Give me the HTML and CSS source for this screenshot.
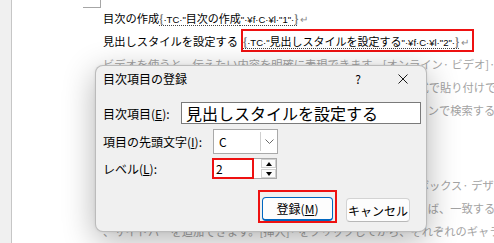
FILE: index.html
```html
<!DOCTYPE html>
<html lang="ja">
<head>
<meta charset="utf-8">
<link rel="stylesheet" href="styles.css">
</head>
<body>
<div class="app">
  <div class="gutter"></div>
  <div class="page">
    <div class="corner"></div>
    <div class="doc">
      <p class="line">目次の作成<span class="field"><b class="brace">{</b>·TC·"<span class="fj">目次の作成</span>"·¥f·C·¥l·"1"·<b class="brace">}</b></span><span class="pm">↵</span></p>
      <p class="line">見出しスタイルを設定する<span class="mark"><span class="field"><b class="brace">{</b>·TC·"<span class="fj">見出しスタイルを設定する</span>"·¥f·C·¥l·"2"·<b class="brace">}</b></span><span class="pm">↵</span></span></p>
      <p class="line faded">ビデオを使うと、伝えたい内容を明確に表現できます。[オンライン· ビデオ]· をクリックすると、追加したいビデオを</p>
      <p class="line faded">クリックすると、追加したいビデオを、その埋め込みコード形式で貼り付けできるようになります。</p>
      <p class="line faded">ようになります。キーワードを入力して最適なビデオをオンラインで検索することもできます。</p>
      <p class="line faded">ともできます。</p>
      <p class="line faded gap">Word· に用意されてるヘッダー、フッター、表紙、テキスト· ボックス· デザインを組み合わせると、</p>
      <p class="line faded">わせると、プロのようなできばえの文書を作成できます。たとえば、一致する表紙、ヘッダー</p>
      <p class="line faded">、サイドバーを追加できます。[挿入]· をクリックしてから、それぞれのギャラリーで目的の要素を選んでください。</p>
    </div>
  </div>
</div>

<div class="dialog">
  <div class="titlebar">
    <span class="title">目次項目の登録</span>
    <span class="help">?</span>
    <svg class="close" width="10" height="10" viewBox="0 0 10 10"><path d="M0.5 0.5L9.5 9.5M9.5 0.5L0.5 9.5" stroke="#1a1a1a" stroke-width="1" fill="none"/></svg>
  </div>
  <div class="form">
    <div class="row r1">
      <span class="lbl l1">目次項目(<u>E</u>):</span>
      <div class="textbox">見出しスタイルを設定する</div>
    </div>
    <div class="row r2">
      <span class="lbl l2">項目の先頭文字(<u>I</u>):</span>
      <div class="combo">
        <span class="combo-val">C</span>
        <span class="combo-btn"><svg width="9" height="5" viewBox="0 0 9 5"><path d="M0.5 0.5L4.5 4.5L8.5 0.5" stroke="#6a6a6a" stroke-width="1" fill="none"/></svg></span>
      </div>
    </div>
    <div class="row r3">
      <span class="lbl l3">レベル(<u>L</u>):</span>
      <div class="spin">
        <span class="spin-val">2</span>
        <span class="spin-btns">
          <span class="sb"><svg width="6" height="4" viewBox="0 0 6 4"><path d="M3 0L6 4H0Z" fill="#000"/></svg></span>
          <span class="sb"><svg width="6" height="4" viewBox="0 0 6 4"><path d="M0 0H6L3 4Z" fill="#000"/></svg></span>
        </span>
      </div>
    </div>
  </div>
  <div class="buttons">
    <div class="hl"><button class="btn primary">登録(<u>M</u>)</button></div>
    <button class="btn cancel">キャンセル</button>
  </div>
</div>
</body>
</html>
```

FILE: styles.css
```css
* { box-sizing: border-box; margin: 0; padding: 0; }
html, body { width: 494px; height: 243px; overflow: hidden; }
body {
  font-family: "Noto Sans CJK JP", "Noto Sans", sans-serif;
  background: #fff;
  color: #000;
  position: relative;
}

.app { display: flex; height: 243px; }
.gutter { width: 12px; flex: none; background: #f0f0f0; border-right: 1px solid #c6c6c6; }
.page { flex: 1; overflow: hidden; background: #fff; }
.corner {
  width: 18px; height: 8px; margin-left: 71px;
  border-right: 1px solid #a6a6a6; border-bottom: 1px solid #a6a6a6;
}
.doc { margin-top: -1px; padding-left: 91px; font-size: 11.25px; white-space: nowrap; }
.line { height: 23px; line-height: 23px; }
.faded { color: #a3a3a3; }
.gap { margin-top: 29px; }

.field {
  font-family: "Liberation Sans", "Noto Sans CJK JP", sans-serif;
  font-size: 9.5px;
  text-decoration: underline dotted #444;
  text-underline-offset: 2px;
}
.fj { font-family: "Noto Sans CJK JP", sans-serif; font-size: 11px; }
.brace { font-family: "Noto Sans CJK JP", sans-serif; color: #7a7a7a; font-weight: bold; font-size: 11px; }
.pm { color: #8a8a8a; font-size: 10px; margin-left: 2px; }
.mark {
  display: inline-block;
  vertical-align: top;
  height: 23px;
  margin-top: -1px;
  margin-left: 3px;
  line-height: 21px;
  border: 2px solid #ee1111;
  padding-right: 3px;
}

.dialog {
  position: absolute;
  left: 95px; top: 65px;
  width: 332px; height: 167px;
  background: #f0f0f0;
  border: 1px solid rgba(0,0,0,0.22);
  border-radius: 8px;
  box-shadow: 0 8px 32px rgba(0,0,0,0.3), 0 0 3px rgba(0,0,0,0.08);
  display: flex;
  flex-direction: column;
  font-size: 12px;
}
.titlebar { height: 25px; display: flex; align-items: center; padding-left: 7px; }
.title { flex: 1; }
.help { width: 14px; text-align: center; margin-right: 33px; }
.close { margin-right: 18px; }

.form { margin-top: 11px; padding-left: 7px; display: flex; flex-direction: column; }
.row { display: flex; align-items: center; }
.r1 { height: 22px; }
.r2 { height: 25px; margin-top: 5px; }
.r3 { height: 21px; margin-top: 4px; }
.lbl { flex: none; }
.l1 { width: 78px; }
.l2 { width: 110px; }
.l3 { width: 109px; }

.textbox {
  width: 240px; height: 22px;
  background: #fff; border: 1px solid #7a7a7a;
  font-size: 16px; line-height: 20px; padding-left: 4px;
}
.combo { width: 65px; height: 25px; border: 1px solid #a9a9a9; background: #fff; display: flex; }
.combo-val { flex: 1; padding-left: 5px; line-height: 23px; }
.combo-btn {
  width: 17px; margin: 2px 0; border-left: 1px solid #cfcfcf;
  display: flex; align-items: center; justify-content: center;
}
.spin { width: 65px; height: 21px; border: 1px solid #a9a9a9; background: #fff; display: flex; align-items: center; }
.spin-val {
  width: 40px; height: 19px; line-height: 19px; padding-left: 3px;
  outline: 2px solid #ee1111; outline-offset: -1px;
}
.spin-btns { margin-left: 8px; display: flex; flex-direction: column; gap: 1px; }
.sb {
  width: 15px; height: 9px; border: 1px solid #d0d0d0; background: #fbfbfb;
  display: flex; align-items: center; justify-content: center;
}

.buttons {
  margin-top: 11px; display: flex; justify-content: flex-end; align-items: flex-end;
  padding-right: 16px; gap: 9px;
}
.hl { width: 79px; height: 33px; border: 2px solid #ee1111; padding: 5px 2px 0; }
.btn {
  font: inherit; font-size: 12px; height: 24px; border-radius: 4px;
  background: #fdfdfd; border: 1px solid #d3d3d3; border-bottom-color: #b8b8b8; color: #000;
  display: flex; align-items: center; justify-content: center;
}
.primary { width: 71px; border: 1px solid #0067c0; border-bottom: 2px solid #0067c0; }
.cancel { width: 64px; margin-bottom: 1px; }
```
